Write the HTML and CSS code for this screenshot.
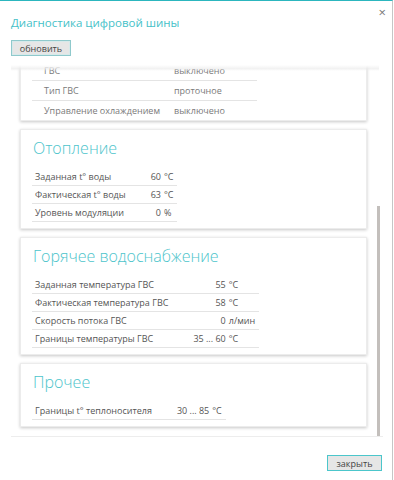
FILE: index.html
```html
<!DOCTYPE html>
<html lang="ru">
<head>
<meta charset="utf-8">
<link rel="stylesheet" href="styles.css">
</head>
<body>
<div class="dialog">
  <div class="header">
    <h1 class="title">Диагностика цифровой шины</h1>
    <span class="close">×</span>
  </div>
  <div class="toolbar"><button class="btn btn-refresh">обновить</button></div>
  <div class="scroll">
    <div class="scroll-content">
      <section class="card card-compact">
        <table class="grid grid-compact">
          <tr><td class="lbl">ГВС</td><td class="val">выключено</td></tr>
          <tr><td class="lbl">Тип ГВС</td><td class="val">проточное</td></tr>
          <tr><td class="lbl">Управление охлаждением</td><td class="val">выключено</td></tr>
        </table>
      </section>
      <section class="card">
        <h2 class="card-title">Отопление</h2>
        <table class="grid">
          <tr><td class="lbl">Заданная t° воды</td><td class="num">60</td><td class="unit">°C</td></tr>
          <tr><td class="lbl">Фактическая t° воды</td><td class="num">63</td><td class="unit">°C</td></tr>
          <tr><td class="lbl">Уровень модуляции</td><td class="num">0</td><td class="unit">%</td></tr>
        </table>
      </section>
      <section class="card">
        <h2 class="card-title">Горячее водоснабжение</h2>
        <table class="grid">
          <tr><td class="lbl">Заданная температура ГВС</td><td class="num">55</td><td class="unit">°C</td></tr>
          <tr><td class="lbl">Фактическая температура ГВС</td><td class="num">58</td><td class="unit">°C</td></tr>
          <tr><td class="lbl">Скорость потока ГВС</td><td class="num">0</td><td class="unit">л/мин</td></tr>
          <tr><td class="lbl">Границы температуры ГВС</td><td class="num">35 ... 60</td><td class="unit">°C</td></tr>
        </table>
      </section>
      <section class="card">
        <h2 class="card-title">Прочее</h2>
        <table class="grid">
          <tr><td class="lbl">Границы t° теплоносителя</td><td class="num">30 ... 85</td><td class="unit">°C</td></tr>
        </table>
      </section>
    </div>
    <div class="shade"></div>
    <div class="thumb"></div>
  </div>
  <div class="footer"><button class="btn btn-close">закрыть</button></div>
</div>
</body>
</html>
```
FILE: styles.css
```css
html, body {
  margin: 0;
  padding: 0;
  background: #fff;
}
body {
  font-family: "Open Sans", "Noto Sans", sans-serif;
  color: #555;
}
.dialog {
  width: 393px;
  height: 480px;
  box-sizing: border-box;
  border-top: 1px solid #2cb6be;
  border-right: 1px solid #c6c6c6;
  display: flex;
  flex-direction: column;
}
.header {
  display: flex;
  justify-content: space-between;
  align-items: flex-start;
  padding: 0 6px 0 11px;
  height: 38px;
  flex: none;
}
.title {
  margin: 13px 0 0;
  font-size: 11.5px;
  line-height: 18px;
  font-weight: 400;
  color: #45c1c8;
}
.close {
  margin-top: 4px;
  font-size: 13px;
  line-height: 14px;
  color: #777;
}
.toolbar {
  display: flex;
  align-items: flex-start;
  padding: 1px 0 0 11px;
  height: 25px;
  flex: none;
}
.btn {
  font-family: inherit;
  font-size: 9px;
  color: #444;
  background: #e6e6e6;
  border: 1px solid #7fcbd0;
  height: 16px;
  padding: 0;
  margin: 0;
  line-height: 13px;
}
.btn-refresh {
  width: 60px;
  border-color: #8fc9cc;
  box-shadow: inset 0 0 0 1px #d7e9ea;
}
.scroll {
  position: relative;
  flex: none;
  margin-left: 11px;
  width: 372px;
  height: 371px;
  overflow: hidden;
  border-bottom: 1px solid #ededed;
  display: flex;
  flex-direction: column;
  justify-content: flex-end;
}
.scroll-content {
  display: flex;
  flex-direction: column;
  gap: 8px;
  padding: 0 0 9px 9px;
}
.shade {
  position: absolute;
  left: 0;
  right: 4px;
  top: 0;
  height: 6px;
  background: linear-gradient(#fff, rgba(236,236,236,0.7) 60%, rgba(255,255,255,0));
}
.thumb {
  position: absolute;
  right: 3px;
  bottom: 0;
  width: 3px;
  height: 230px;
  background: #c3bfbc;
}
.card {
  width: 347px;
  box-sizing: border-box;
  background: #fff;
  border: 1px solid #ececec;
  box-shadow: 0 1px 3px rgba(0,0,0,0.22);
  padding: 6px 0 6px 11px;
}
.card-title {
  margin: 0 0 8px 1px;
  font-size: 16px;
  line-height: 24px;
  font-weight: 300;
  color: #4cc4cb;
}
.grid {
  border-collapse: collapse;
  font-size: 9px;
  color: #555;
}
.grid td {
  height: 17px;
  padding: 0;
  border-bottom: 1px solid #e4e4e4;
  white-space: nowrap;
}
.grid .lbl {
  padding: 0 3px;
}
.grid .num {
  text-align: right;
  padding-left: 22px;
}
.grid .unit {
  padding: 0 4px 0 3px;
}
.card-compact {
  padding-top: 0;
  padding-bottom: 0;
}
.grid-compact {
  color: #7a7a7a;
}
.grid-compact td {
  height: 19px;
}
.grid-compact tr:last-child td {
  border-bottom: none;
}
.grid-compact .lbl {
  width: 130px;
  padding: 0 0 0 12px;
}
.grid-compact .val {
  width: 83px;
  padding: 0;
}
.footer {
  flex: 1;
  display: flex;
  justify-content: flex-end;
  align-items: flex-start;
  padding: 18px 10px 0 0;
}
.btn-close {
  width: 55px;
  border-color: #4cc6cb;
}
```
